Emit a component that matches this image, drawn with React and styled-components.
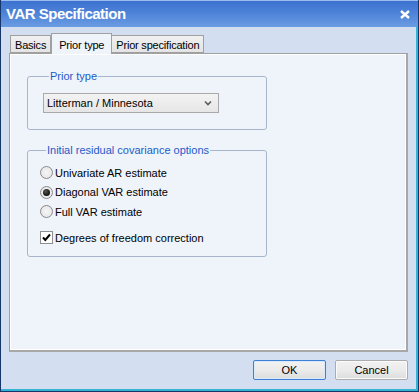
import React from "react";
import styled, { createGlobalStyle } from "styled-components";

const GlobalStyle = createGlobalStyle`
  html, body {
    margin: 0;
    padding: 0;
    background: #ffffff;
  }
  * {
    box-sizing: border-box;
  }
`;

const FONT = `"Liberation Sans", Arial, sans-serif`;

export default function App() {
  return (
    <>
      <GlobalStyle />
      <Window>
        <TitleBar>
          <Title>VAR Specification</Title>
          <CloseIcon viewBox="0 0 10 9">
            <path d="M1 1 L9 8 M9 1 L1 8" />
          </CloseIcon>
        </TitleBar>
        <Body>
          <TabRow>
            <Tab $first>Basics</Tab>
            <Tab $active>Prior type</Tab>
            <Tab>Prior specification</Tab>
          </TabRow>
          <Panel>
            <Group>
              <Legend>Prior type</Legend>
              <Select>
                <span>Litterman / Minnesota</span>
                <Chevron viewBox="0 0 8 6">
                  <path d="M1 1.5 L4 4.5 L7 1.5" />
                </Chevron>
              </Select>
            </Group>
            <Group $second>
              <Legend>Initial residual covariance options</Legend>
              <OptionList>
                <Option>
                  <Radio />
                  Univariate AR estimate
                </Option>
                <Option>
                  <Radio $checked />
                  Diagonal VAR estimate
                </Option>
                <Option>
                  <Radio />
                  Full VAR estimate
                </Option>
              </OptionList>
              <Option $check>
                <CheckBox>
                  <svg viewBox="0 0 11 11" width="11" height="11">
                    <path d="M2 5.5 L4.3 8 L9 2.5" />
                  </svg>
                </CheckBox>
                Degrees of freedom correction
              </Option>
            </Group>
          </Panel>
          <Footer>
            <Button $default>OK</Button>
            <Button>Cancel</Button>
          </Footer>
        </Body>
      </Window>
    </>
  );
}

const Window = styled.div`
  width: 419px;
  height: 392px;
  display: flex;
  flex-direction: column;
  border: 1px solid #163569;
  border-top: none;
  background: #d3dff0;
  font-family: ${FONT};
  font-size: 11px;
  color: #000;
`;

const TitleBar = styled.div`
  height: 27px;
  flex: none;
  display: flex;
  align-items: center;
  justify-content: space-between;
  padding: 0 8px 2px 5px;
  background: linear-gradient(to bottom, #3b72cf 0%, #4f84d8 50%, #6b9de3 100%);
  border-top: 1px solid #9cbcf0;
`;

const Title = styled.div`
  color: #ffffff;
  font-weight: bold;
  font-size: 15px;
  letter-spacing: -0.5px;
`;

const CloseIcon = styled.svg`
  width: 10px;
  height: 9px;
  margin-top: 2px;
  fill: none;
  stroke: #ffffff;
  stroke-width: 2.4;
`;

const Body = styled.div`
  flex: 1;
  display: flex;
  flex-direction: column;
  padding: 6px 8px 0 8px;
  border-right: 2px solid #34b3d4;
  border-bottom: 2px solid #34b3d4;
`;

const TabRow = styled.div`
  height: 20px;
  display: flex;
  align-items: flex-end;
  padding-left: 1px;
  position: relative;
  z-index: 1;
`;

const Tab = styled.div`
  height: ${({ $active }) => ($active ? "21px" : "18px")};
  margin-bottom: ${({ $active }) => ($active ? "-1px" : "0")};
  padding: 1px ${({ $active }) => ($active ? "7px" : "4px")} 0;
  display: flex;
  align-items: center;
  letter-spacing: -0.2px;
  border: 1px solid #a0a0a0;
  border-bottom: ${({ $active }) => ($active ? "none" : "1px solid #a0a0a0")};
  border-left: ${({ $active, $first }) =>
    $active || $first ? "1px solid #a0a0a0" : "none"};
  background: ${({ $active }) =>
    $active ? "#eff3fa" : "linear-gradient(to bottom, #f0f0f0, #e4e4e4)"};
  white-space: nowrap;
`;

const Panel = styled.div`
  height: 299px;
  flex: none;
  display: flex;
  flex-direction: column;
  gap: 14px;
  padding: 16px 0 0 17px;
  background: #eff3fa;
  border: 1px solid #a0a0a0;
  border-right: 2px solid #a8a8a8;
  border-bottom: 2px solid #a8a8a8;
  box-shadow: inset -1px -1px 0 #ffffff, inset 1px 1px 0 #ffffff;
`;

const Group = styled.fieldset`
  width: 240px;
  margin: 0;
  padding: ${({ $second }) => ($second ? "9px 0 12px 12px" : "10px 0 16px 15px")};
  border: 1px solid #a7b6cd;
  border-radius: 3px;
`;

const Legend = styled.legend`
  margin-left: 6px;
  padding: 0 1px;
  color: #1c5bc8;
  line-height: 13px;
`;

const Select = styled.div`
  width: 176px;
  height: 20px;
  display: flex;
  align-items: center;
  justify-content: space-between;
  padding: 0 6px 0 3px;
  border: 1px solid #a9a9a9;
  background: linear-gradient(to bottom, #f3f3f3, #e6e6e6);
`;

const Chevron = styled.svg`
  width: 8px;
  height: 6px;
  fill: none;
  stroke: #5a5a5a;
  stroke-width: 1.6;
`;

const OptionList = styled.div`
  display: flex;
  flex-direction: column;
  gap: 6.5px;
`;

const Option = styled.div`
  display: flex;
  align-items: center;
  gap: 2px;
  height: 13px;
  margin-top: ${({ $check }) => ($check ? "13px" : "0")};
`;

const Radio = styled.span`
  width: 13px;
  height: 13px;
  border-radius: 50%;
  border: 1px solid #8a8a8a;
  background: radial-gradient(circle at 50% 50%, #f6f6f6 0%, #e2e2e2 100%);
  display: flex;
  align-items: center;
  justify-content: center;
  flex: none;

  &::after {
    content: "";
    display: ${({ $checked }) => ($checked ? "block" : "none")};
    width: 7px;
    height: 7px;
    border-radius: 50%;
    background: radial-gradient(circle at 40% 35%, #555 0%, #111 70%);
  }
`;

const CheckBox = styled.span`
  width: 13px;
  height: 13px;
  border: 1px solid #8e8f8f;
  background: #ffffff;
  display: flex;
  align-items: center;
  justify-content: center;
  flex: none;

  svg {
    fill: none;
    stroke: #000000;
    stroke-width: 2;
  }
`;

const Footer = styled.div`
  flex: 1;
  display: flex;
  justify-content: flex-end;
  align-items: flex-start;
  gap: 9px;
  padding-top: 8px;
`;

const Button = styled.div`
  width: 73px;
  height: 20px;
  display: flex;
  align-items: center;
  justify-content: center;
  border: 1px solid ${({ $default }) => ($default ? "#3c7fd6" : "#acacac")};
  border-radius: 2px;
  background: linear-gradient(to bottom, #f2f2f2 0%, #ebebeb 50%, #dddddd 100%);
  box-shadow: inset 0 0 0 1px ${({ $default }) => ($default ? "#d8eaf9" : "#fbfbfb")};
`;
